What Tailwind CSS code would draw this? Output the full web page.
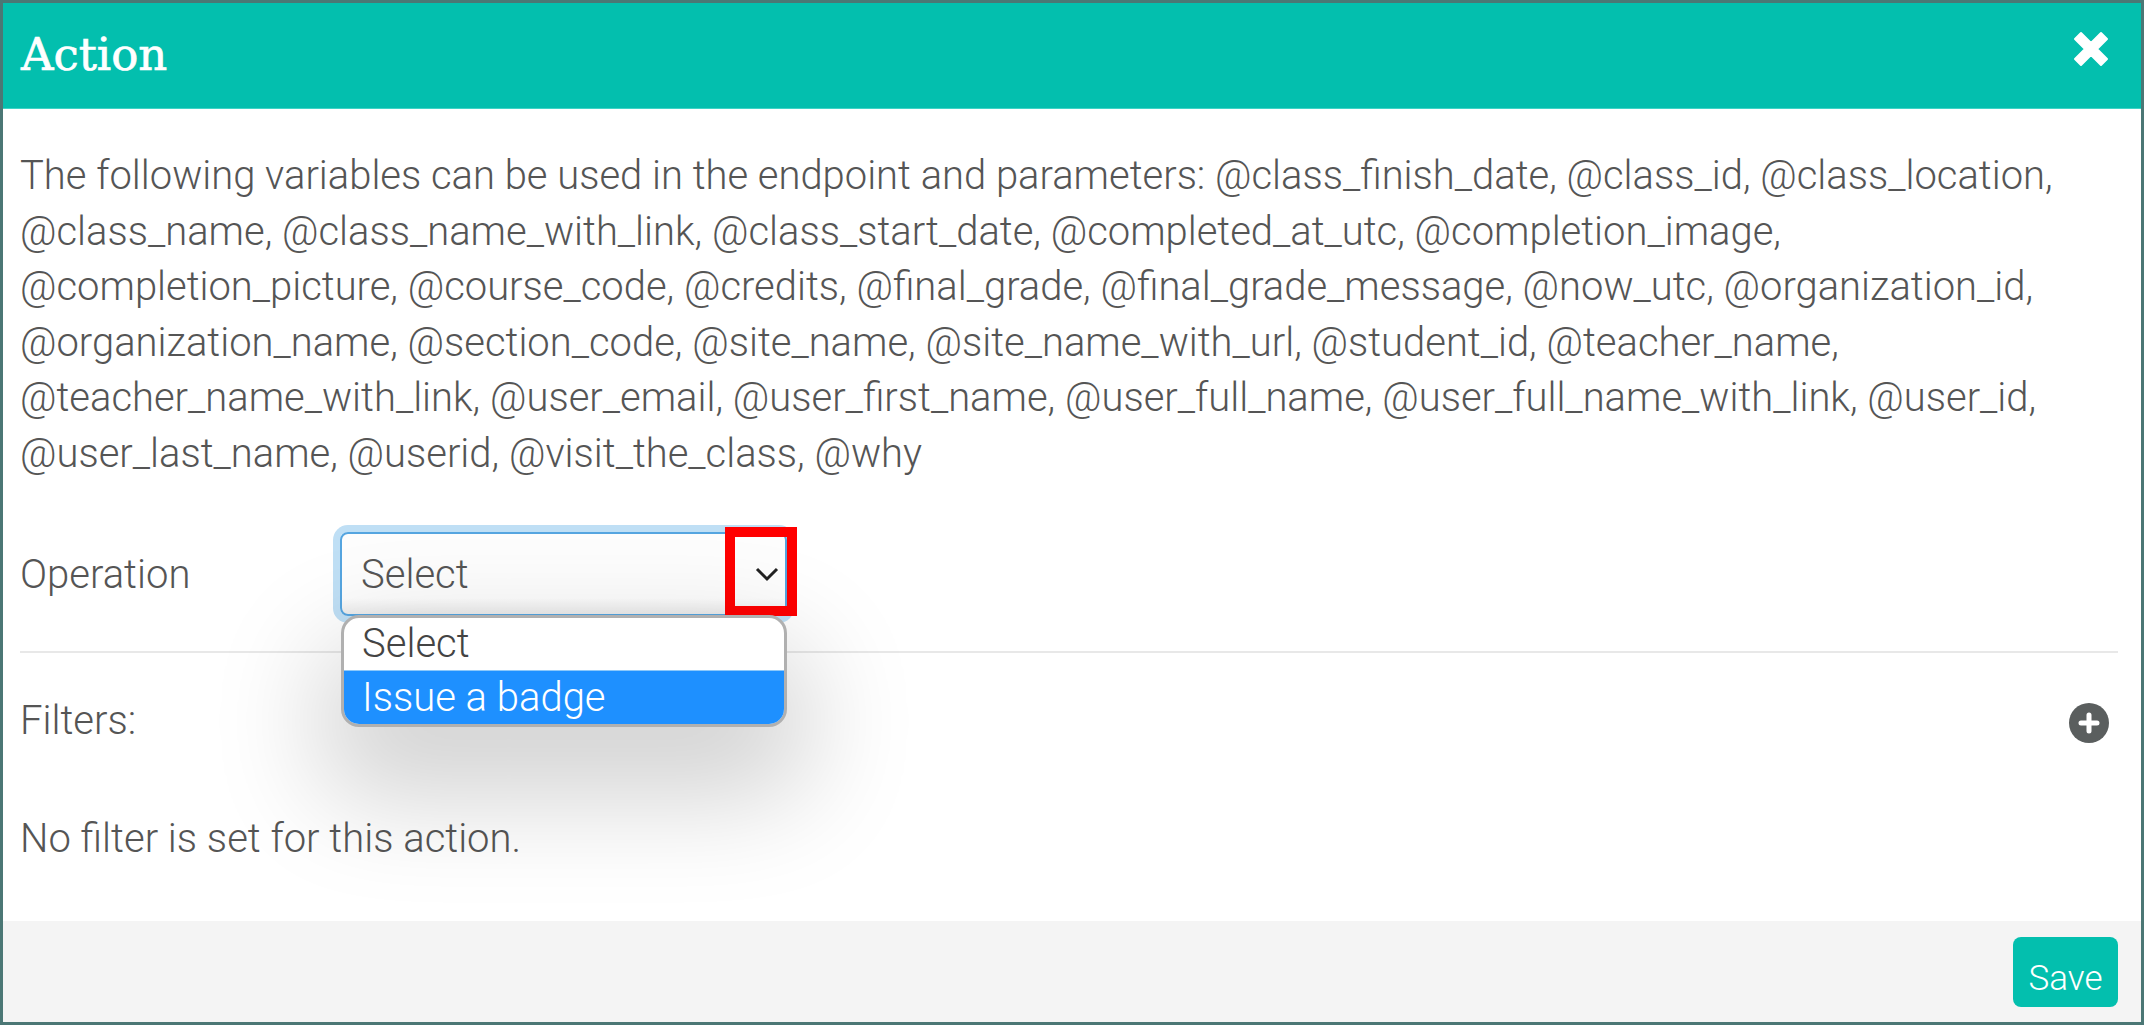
<!DOCTYPE html>
<html lang="en">
<head>
  <meta charset="UTF-8" />
  <title>Action</title>
  <script src="https://cdn.jsdelivr.net/npm/@tailwindcss/browser@4"></script>
</head>
<body class="bg-white">
  <div class="w-[2144px] h-[1025px] flex flex-col border-[3px] border-[#4b7775] bg-white font-['Roboto',sans-serif] font-light text-[#555] overflow-hidden">
    <!-- header -->
    <div class="h-[106px] shrink-0 flex items-center justify-between pl-[18px] pr-[31px] bg-[#03bfae] border-b border-[#3ed3c6] text-white">
      <h1 class="font-['DejaVu_Serif',serif] text-[45px] font-normal mb-[2px] [-webkit-text-stroke:0.7px_white]">Action</h1>
      <svg class="w-[38px] h-[38px] mb-[14px]" viewBox="0 0 38 38"><path d="M3 9 L9 3 L19 13 L29 3 L35 9 L25 19 L35 29 L29 35 L19 25 L9 35 L3 29 L13 19 Z" fill="#fff" stroke="#fff" stroke-width="2" stroke-linejoin="round"/></svg>
    </div>

    <!-- body -->
    <div class="flex-1 flex flex-col min-h-0">
      <p class="pt-[39px] pl-[17px] pr-[60px] text-[39.95px] leading-[55.5px] whitespace-nowrap">The following variables can be used in the endpoint and parameters: @class_finish_date, @class_id, @class_location,<br>@class_name, @class_name_with_link, @class_start_date, @completed_at_utc, @completion_image,<br>@completion_picture, @course_code, @credits, @final_grade, @final_grade_message, @now_utc, @organization_id,<br>@organization_name, @section_code, @site_name, @site_name_with_url, @student_id, @teacher_name,<br>@teacher_name_with_link, @user_email, @user_first_name, @user_full_name, @user_full_name_with_link, @user_id,<br>@user_last_name, @userid, @visit_the_class, @why</p>

      <div class="mt-[51px] pl-[17px] flex items-center">
        <label class="w-[320px] text-[40px] leading-[60px] pt-[2px]">Operation</label>
        <div class="relative w-[447px] h-[84px] rounded-[8px] border-2 border-[#55a5e0] bg-gradient-to-b from-[#fdfdfd] from-80% to-[#ececec] shadow-[0_0_0_7px_#bfdff5] flex items-center pl-[19px] pt-[2px] text-[40px]">
          Select
          <svg class="absolute right-[5px] top-[32px] w-[26px] h-[16px]" viewBox="0 0 26 16"><path d="M3 3 L13 13 L23 3" fill="none" stroke="#222" stroke-width="3"/></svg>
          <!-- red highlight box -->
          <div class="absolute left-[383px] top-[-7px] w-[72px] h-[89px] border-[10px] border-[#ff0000]"></div>
          <!-- open dropdown -->
          <div class="absolute left-[-1px] top-[81px] w-[446px] h-[112px] rounded-[18px] border-[3px] border-[#b0b0b0] bg-white overflow-hidden shadow-[0_50px_110px_20px_rgba(0,0,0,0.18)] z-10 text-[40px] leading-[52px]">
            <div class="h-[53px] pl-[18px] text-[#444] border-b border-[#8cc8fa]">Select</div>
            <div class="h-[56px] pl-[18px] leading-[53px] bg-[#1e90ff] text-white">Issue a badge</div>
          </div>
        </div>
      </div>

      <div class="mt-[35px] ml-[17px] mr-[23px] h-[2px] bg-[#e8e8e8]"></div>

      <div class="mt-[38px] pl-[17px] pr-[32px] flex items-center justify-between">
        <span class="text-[40px] leading-[60px]">Filters:</span>
        <svg class="w-[40px] h-[40px] mt-[4px]" viewBox="0 0 40 40"><circle cx="20" cy="20" r="20" fill="#5a5e5e"/><path d="M20 12 V28 M12 20 H28" stroke="#fff" stroke-width="5" stroke-linecap="round"/></svg>
      </div>

      <p class="mt-[58px] pl-[17px] text-[40px] leading-[60px]">No filter is set for this action.</p>
    </div>

    <!-- footer -->
    <div class="h-[101px] shrink-0 flex items-center justify-end pr-[23px] bg-[#f4f4f4]">
      <button class="w-[105px] h-[70px] pt-[16px] rounded-[8px] bg-[#03bfae] text-white text-[35px] font-light">Save</button>
    </div>
  </div>
</body>
</html>
